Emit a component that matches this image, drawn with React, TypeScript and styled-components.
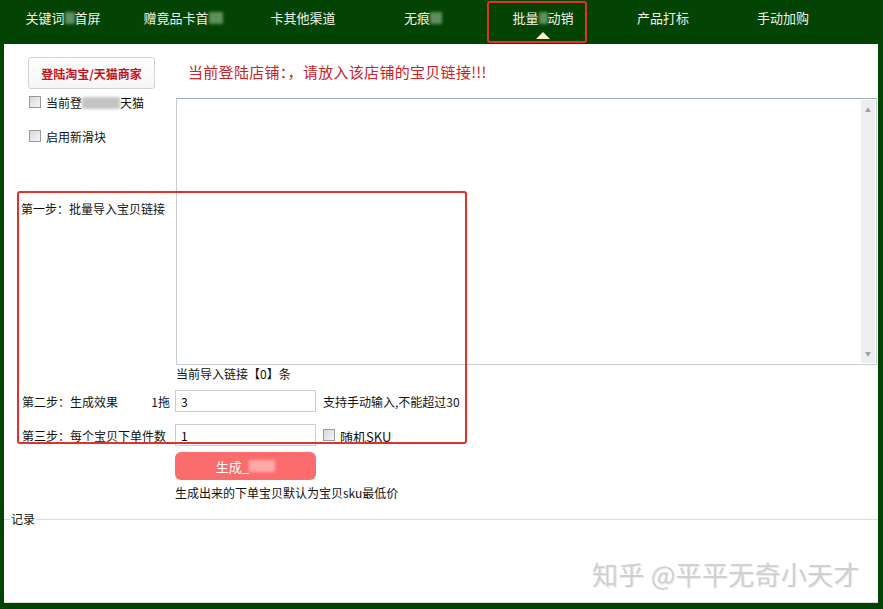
import React from "react";
import styled, { createGlobalStyle } from "styled-components";

const GlobalStyle = createGlobalStyle`
  html, body {
    margin: 0;
    padding: 0;
    background: #034303;
  }
  * {
    box-sizing: border-box;
  }
`;

const Frame = styled.div`
  position: relative;
  width: 883px;
  height: 609px;
  background: #034303;
  display: flex;
  flex-direction: column;
  font-family: "Noto Sans CJK SC", "DejaVu Sans", sans-serif;
  font-size: 12px;
  color: #111;
  overflow: hidden;
`;

const Nav = styled.div`
  height: 44px;
  display: flex;
  padding-left: 3px;
`;

const NavItem = styled.div<{ $active?: boolean }>`
  position: relative;
  width: 120px;
  height: 100%;
  text-align: center;
  padding-top: 9px;
  color: #f4f4e8;
  font-size: 13px;
  line-height: 18px;
  white-space: nowrap;

  &::after {
    content: "";
    display: ${(p) => (p.$active ? "block" : "none")};
    position: absolute;
    left: 50%;
    bottom: 5px;
    transform: translateX(-50%);
    border-left: 7px solid transparent;
    border-right: 7px solid transparent;
    border-bottom: 7px solid #fbf3d2;
  }
`;

const Blur = styled.span<{ $w: number; $c: string }>`
  display: inline-block;
  width: ${(p) => p.$w}px;
  height: 12px;
  background: ${(p) => p.$c};
  filter: blur(1.5px);
  vertical-align: -1px;
`;

const Panel = styled.div`
  flex: 1;
  margin: 0 5px 6px 4px;
  background: #fff;
  display: flex;
  flex-direction: column;
  padding-top: 13px;
`;

const Grid = styled.div`
  display: grid;
  grid-template-columns: 171px 1fr;
  align-items: center;
`;

const LoginButton = styled.div`
  margin-left: 24px;
  width: 127px;
  height: 32px;
  border: 1px solid #d2d2d2;
  border-radius: 3px;
  background: linear-gradient(#ffffff, #f6f6f6);
  color: #c4121b;
  font-weight: bold;
  font-size: 12px;
  display: flex;
  align-items: center;
  justify-content: center;
`;

const Message = styled.div`
  padding: 0 0 4px 13px;
  color: #c8242a;
  font-size: 15px;
  letter-spacing: 0.3px;
`;

const LeftCol = styled.div`
  align-self: start;
  display: flex;
  flex-direction: column;
  padding-top: 5px;
`;

const CheckRow = styled.label<{ $gap?: number }>`
  display: flex;
  align-items: center;
  gap: 5px;
  margin-left: 25px;
  margin-top: ${(p) => p.$gap ?? 0}px;
  height: 16px;
  white-space: nowrap;
`;

const Box = styled.span`
  width: 12px;
  height: 12px;
  border: 1px solid #9a9a9a;
  background: linear-gradient(135deg, #d8d8d8, #f6f6f6);
  flex: none;
`;

const StepLabel = styled.div<{ $top?: number }>`
  margin-left: 17px;
  margin-top: ${(p) => p.$top ?? 0}px;
  line-height: 16px;
  white-space: nowrap;
`;

const LinkBox = styled.div`
  margin: 9px 0 0 1px;
  width: 701px;
  height: 267px;
  display: flex;
  border: 1px solid #c6d0d0;
  border-top-color: #9fb3b3;
  padding: 1px 1px 1px 0;
`;

const TextArea = styled.textarea`
  flex: 1;
  border: none;
  resize: none;
  overflow: hidden;
  outline: none;
  font-family: inherit;
`;

const ScrollBar = styled.div`
  width: 14px;
  background: #eeeef0;
  display: flex;
  flex-direction: column;
  justify-content: space-between;
  align-items: center;
  padding: 7px 0 6px;
  color: #a0a0a0;
  font-size: 6px;
  line-height: 6px;
`;

const CountText = styled.div`
  grid-column: 2;
  padding-left: 1px;
  margin-top: 1px;
  line-height: 16px;
`;

const StepRow = styled.div<{ $top: number }>`
  display: grid;
  grid-template-columns: 171px auto 1fr;
  align-items: center;
  margin-top: ${(p) => p.$top}px;
`;

const StepLeft = styled.div`
  display: flex;
  justify-content: space-between;
  padding: 0 5px 0 18px;
`;

const Input = styled.input`
  width: 141px;
  height: 22px;
  border: 1px solid #cdcdcd;
  padding: 0 5px;
  font-family: inherit;
  font-size: 12px;
  outline: none;
`;

const Aside = styled.div`
  display: flex;
  align-items: center;
  gap: 5px;
  padding-left: 7px;
`;

const SkuText = styled.span`
  font-size: 13px;
  padding-top: 3px;
`;

const GenButton = styled.div`
  margin: 6px 0 0 171px;
  width: 141px;
  height: 28px;
  border-radius: 6px;
  background: #fb6d6d;
  color: #fff;
  font-size: 13px;
  display: flex;
  align-items: center;
  justify-content: center;
`;

const Hint = styled.div`
  margin: 5px 0 0 171px;
  line-height: 16px;
`;

const Records = styled.fieldset`
  flex: 1;
  margin: 11px 0 0 0;
  padding: 0;
  border: 1px solid #dcdcdc;
  border-left: none;
  border-right: none;

  legend {
    margin-left: 6px;
    padding: 0 1px;
    font-size: 12px;
    line-height: 14px;
  }
`;

const Watermark = styled.div`
  position: absolute;
  left: 592px;
  top: 555px;
  font-size: 26px;
  color: #d0d0d0;
  letter-spacing: 0.3px;
  text-shadow: 1px 1px 0 #ececec;
`;

const Mark = styled.div<{ $l: number; $t: number; $w: number; $h: number }>`
  position: absolute;
  left: ${(p) => p.$l}px;
  top: ${(p) => p.$t}px;
  width: ${(p) => p.$w}px;
  height: ${(p) => p.$h}px;
  border: 2px solid #e0312b;
  border-radius: 3px;
  pointer-events: none;
`;

const navItems: { pre: string; blur?: number; post?: string }[] = [
  { pre: "关键词", blur: 10, post: "首屏" },
  { pre: "赠竟品卡首", blur: 14 },
  { pre: "卡其他渠道" },
  { pre: "无痕", blur: 12 },
  { pre: "批量", blur: 9, post: "动销" },
  { pre: "产品打标" },
  { pre: "手动加购" },
];

export default function App() {
  return (
    <>
      <GlobalStyle />
      <Frame>
        <Nav>
          {navItems.map((n, i) => (
            <NavItem key={i} $active={i === 4}>
              {n.pre}
              {n.blur && <Blur $w={n.blur} $c="#5f8f5f" />}
              {n.post}
            </NavItem>
          ))}
        </Nav>
        <Panel>
          <Grid>
            <LoginButton>登陆淘宝/天猫商家</LoginButton>
            <Message>当前登陆店铺：，请放入该店铺的宝贝链接!!!</Message>
            <LeftCol>
              <CheckRow>
                <Box />
                <span>
                  当前登
                  <Blur $w={38} $c="#c4c4c4" />
                  天猫
                </span>
              </CheckRow>
              <CheckRow $gap={18}>
                <Box />
                启用新滑块
              </CheckRow>
              <StepLabel $top={57}>第一步：批量导入宝贝链接</StepLabel>
            </LeftCol>
            <LinkBox>
              <TextArea />
              <ScrollBar>
                <span>▲</span>
                <span>▼</span>
              </ScrollBar>
            </LinkBox>
            <CountText>当前导入链接【0】条</CountText>
          </Grid>
          <StepRow $top={8}>
            <StepLeft>
              <span>第二步：生成效果</span>
              <span>1拖</span>
            </StepLeft>
            <Input defaultValue="3" />
            <Aside>支持手动输入,不能超过30</Aside>
          </StepRow>
          <StepRow $top={12}>
            <StepLeft>
              <span>第三步：每个宝贝下单件数</span>
            </StepLeft>
            <Input defaultValue="1" />
            <Aside>
              <Box />
              <SkuText>随机SKU</SkuText>
            </Aside>
          </StepRow>
          <GenButton>
            生成_
            <Blur $w={26} $c="#fca9a9" />
          </GenButton>
          <Hint>生成出来的下单宝贝默认为宝贝sku最低价</Hint>
          <Records>
            <legend>记录</legend>
          </Records>
        </Panel>
        <Watermark>知乎 @平平无奇小天才</Watermark>
        <Mark $l={487} $t={1} $w={100} $h={42} />
        <Mark $l={17} $t={191} $w={450} $h={253} />
      </Frame>
    </>
  );
}
